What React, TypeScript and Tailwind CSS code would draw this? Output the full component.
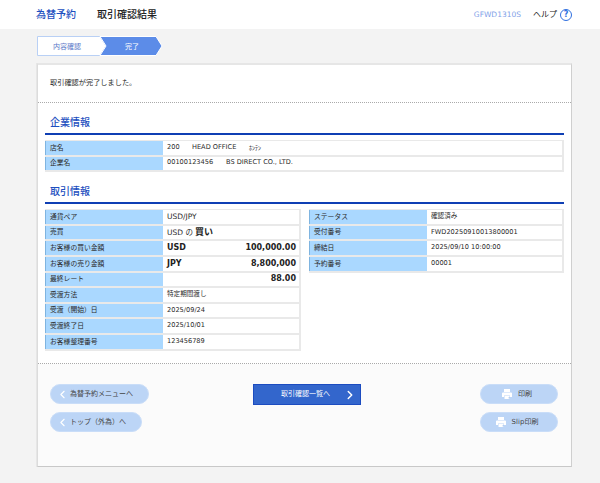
import { ChevronLeft, ChevronRight } from "lucide-react";

const font = "font-['DejaVu_Sans','Noto_Sans_CJK_JP',sans-serif]";

const Row = ({ label, children }: { label: string; children: React.ReactNode }) => (
  <div className="flex h-[15.6px] border-b-2 border-[#e9e9e9]">
    <div className="w-[118px] shrink-0 bg-[#aad8ff] border-l border-[#7fb4e0] pl-[4px] flex items-center text-[6.8px] text-[#2a2a2a]">{label}</div>
    <div className="flex-1 flex items-center pl-[4px] pr-[3px] text-[6.6px] text-[#2a2a2a] bg-white">{children}</div>
  </div>
);

const Amount = ({ cur, value }: { cur?: string; value: string }) => (
  <div className="w-full flex justify-between items-center text-[8px] font-bold text-[#222]">
    <span>{cur}</span>
    <span>{value}</span>
  </div>
);

const Heading = ({ children }: { children: React.ReactNode }) => (
  <div className="border-b-2 border-[#0f3fb4] h-[19px] pl-[5px] pt-[1px] text-[10px] font-medium text-[#1d4fc0] leading-[12px]">
    {children}
  </div>
);

const Table = ({ children, className }: { children: React.ReactNode; className?: string }) => (
  <div className={`border-t border-r-2 border-[#e9e9e9] ${className ?? ""}`}>{children}</div>
);

const Printer = () => (
  <svg width="12" height="12" viewBox="0 0 24 24" fill="#fff">
    <path d="M6 2h12v6H6z" />
    <path d="M4 9h16a2 2 0 0 1 2 2v7h-4v-3H6v3H2v-7a2 2 0 0 1 2-2z" />
    <path d="M7 16h10v6H7z" />
    <path d="M15 19h3v1.5h-3z" fill="#8fb2e6" />
  </svg>
);

const Pill = ({ children, className }: { children: React.ReactNode; className?: string }) => (
  <button className={`h-[20px] rounded-full bg-[#bcd5f6] border border-[#c9ddf8] flex items-center text-[7px] text-[#444] ${className ?? ""}`}>
    {children}
  </button>
);

export default function App() {
  return (
    <div className={`w-[600px] h-[483px] bg-[#f3f3f3] overflow-hidden ${font}`}>
      <header className="h-[29px] bg-white flex items-center pl-[36px] pr-[28px]">
        <span className="text-[10px] font-medium text-[#1d4fc0] w-[61px]">為替予約</span>
        <span className="text-[10px] font-medium text-[#222]">取引確認結果</span>
        <span className="ml-auto text-[7.5px] text-[#7f9fe8]">GFWD1310S</span>
        <span className="ml-[12px] text-[8px] text-[#222]">ヘルプ</span>
        <span className="ml-[3px] w-[12px] h-[12px] rounded-full border border-[#2f6fe0] flex items-center justify-center text-[8px] font-bold text-[#2f6fe0]">?</span>
      </header>

      <div className="pl-[37px] pr-[28px] pt-[7px]">
        <div className="h-[20px] w-[126px]">
          <svg width="126" height="20" viewBox="0 0 126 20">
            <path d="M.5.5H63L69 10 63 19.5H.5z" fill="#fff" stroke="#b9d0f5" />
            <path d="M63 .5H119L125 10 119 19.5H63L69 10z" fill="#5c8ce8" stroke="#fff" />
            <text x="16" y="12.5" fontSize="7" fill="#5c78c8">内容確認</text>
            <text x="88" y="12.5" fontSize="7" fill="#fff">完了</text>
          </svg>
        </div>

        <main className="mt-[7px] h-[404px] bg-white shadow-[-1px_0_0_#e6e6e6] border-t-2 border-t-[#e6e6e6] border-l border-l-[#dcdcdc] border-r border-r-[#cfcfcf] border-b border-b-[#c8c8c8] flex flex-col">
          <div className="h-[38px] pl-[12px] flex items-center text-[7.2px] text-[#2a2a2a] border-b border-dotted border-[#aaa]">
            取引確認が完了しました。
          </div>

          <div className="px-[7px] pt-[13px] h-[261px] border-b border-dotted border-[#aaa]">
            <Heading>企業情報</Heading>
            <Table className="mt-[5px]">
              <Row label="店名">
                <span className="w-[25px]">200</span>
                <span className="w-[45px]">HEAD OFFICE</span>
                <span className="ml-[12px] text-[6px]">ﾎﾝﾃﾝ</span>
              </Row>
              <Row label="企業名">
                <span className="w-[47px]">00100123456</span>
                <span className="ml-[12px]">BS DIRECT CO., LTD.</span>
              </Row>
            </Table>

            <div className="mt-[13px]">
              <Heading>取引情報</Heading>
            </div>
            <div className="mt-[5px] flex gap-[8px] items-start">
              <Table className="w-[256px]">
                <Row label="通貨ペア"><span className="text-[7.5px]">USD/JPY</span></Row>
                <Row label="売買">
                  <span className="text-[7.5px]">USD の</span>
                  <span className="ml-[2px] text-[9px] font-bold text-[#222]">買い</span>
                </Row>
                <Row label="お客様の買い金額"><Amount cur="USD" value="100,000.00" /></Row>
                <Row label="お客様の売り金額"><Amount cur="JPY" value="8,800,000" /></Row>
                <Row label="最終レート"><Amount value="88.00" /></Row>
                <Row label="受渡方法">特定期間渡し</Row>
                <Row label="受渡（開始）日">2025/09/24</Row>
                <Row label="受渡終了日">2025/10/01</Row>
                <Row label="お客様整理番号">123456789</Row>
              </Table>
              <Table className="w-[255px]">
                <Row label="ステータス">確認済み</Row>
                <Row label="受付番号">FWD20250910013800001</Row>
                <Row label="締結日">2025/09/10 10:00:00</Row>
                <Row label="予約番号">00001</Row>
              </Table>
            </div>
          </div>

          <footer className="flex-1 bg-[#fbfbfb] pt-[20px] pl-[12px] pr-[13px] flex items-start">
            <div className="w-[203px] flex flex-col gap-[8px] items-start">
              <Pill className="w-[99px] pl-[5px]">
                <ChevronLeft size={13} color="#fff" strokeWidth={2} />
                <span className="ml-[1px]">為替予約メニューへ</span>
              </Pill>
              <Pill className="w-[92px] pl-[5px]">
                <ChevronLeft size={13} color="#fff" strokeWidth={2} />
                <span className="ml-[1px]">トップ（外為）へ</span>
              </Pill>
            </div>
            <button className="w-[108px] h-[21px] bg-[#3366cc] border border-[#1c4cc0] flex items-center text-[7px] text-white">
              <span className="ml-[27px]">取引確認一覧へ</span>
              <ChevronRight size={14} color="#fff" strokeWidth={2.5} className="ml-auto mr-[3px]" />
            </button>
            <div className="ml-auto flex flex-col gap-[8px]">
              <Pill className="w-[78px] justify-center gap-[5px] pr-[5px]">
                <Printer />
                <span>印刷</span>
              </Pill>
              <Pill className="w-[78px] justify-center gap-[5px] pr-[5px]">
                <Printer />
                <span>Slip印刷</span>
              </Pill>
            </div>
          </footer>
        </main>
      </div>
    </div>
  );
}
